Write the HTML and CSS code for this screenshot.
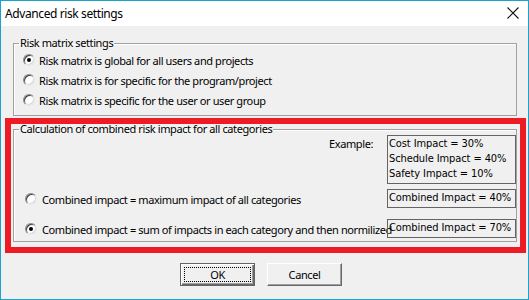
FILE: index.html
```html
<!DOCTYPE html>
<html lang="en">

<head>
    <meta charset="UTF-8">
    <title>Advanced risk settings</title>
    <link rel="stylesheet" href="styles.css">
</head>

<body>

    <div class="window">
        <div class="titlebar">
            <span class="title">Advanced risk settings</span>
            <svg class="close" width="12" height="12" viewBox="0 0 12 12">
                <path d="M0.5 0.5 L11.5 11.5 M11.5 0.5 L0.5 11.5" stroke="#111" stroke-width="1.1" fill="none"/>
            </svg>
        </div>

        <div class="content">
            <fieldset class="group group-matrix">
                <legend>Risk matrix settings</legend>
                <label class="option"><span class="radio checked"></span>Risk matrix is global for all users and projects</label>
                <label class="option"><span class="radio"></span>Risk matrix is for specific for the program/project</label>
                <label class="option"><span class="radio"></span>Risk matrix is specific for the user or user group</label>
            </fieldset>

            <div class="highlight">
                <fieldset class="group group-calc">
                    <legend>Calculation of combined risk impact for all categories</legend>
                    <div class="calc-grid">
                        <div class="example-label">Example:</div>
                        <div class="box box-example">
                            Cost Impact = 30%<br>
                            Schedule Impact = 40%<br>
                            Safety Impact = 10%
                        </div>

                        <label class="option option-calc row-max"><span class="radio"></span>Combined impact = maximum impact of all categories</label>
                        <div class="box box-result row-max">Combined Impact = 40%</div>

                        <label class="option option-calc row-sum"><span class="radio checked"></span>Combined impact = sum of impacts in each category and then normilized</label>
                        <div class="box box-result row-sum">Combined Impact = 70%</div>
                    </div>
                </fieldset>
            </div>

            <div class="buttons">
                <button class="btn btn-default"><span class="focus">OK</span></button>
                <button class="btn">Cancel</button>
            </div>
        </div>
    </div>

</body>

</html>
```

FILE: styles.css
```css
body {
    margin: 0;
    font-family: 'Noto Sans', 'Open Sans', sans-serif;
    font-size: 11px;
    letter-spacing: -0.4px;
    color: #000;
    background-color: #fff;
}

.window {
    width: 529px;
    height: 300px;
    box-sizing: border-box;
    border: 1px solid #1aa1cc;
    display: flex;
    flex-direction: column;
    overflow: hidden;
}

.titlebar {
    height: 25px;
    flex: none;
    display: flex;
    align-items: center;
    justify-content: space-between;
    padding: 0 9px 0 4px;
    background-color: #fff;
}

.title {
    font-size: 12px;
    letter-spacing: -0.4px;
    line-height: 18px;
}

.close {
    display: block;
    margin-top: -1px;
}

.content {
    flex: 1;
    background-color: #f0f0f0;
}

/* Cadres de groupe */
.group {
    box-sizing: border-box;
    width: 504px;
    margin: 0;
    padding: 0;
    border: 1px solid #a0a0a0;
    box-shadow: inset 1px 1px 0 #fff;
    min-width: 0;
}

.group legend {
    margin-left: 5px;
    padding: 0 1px;
    line-height: 14px;
}

.group-matrix {
    margin: 10px 0 0 12px;
    padding-bottom: 5px;
}

.option {
    display: flex;
    align-items: center;
    height: 20px;
    padding-left: 9px;
    white-space: nowrap;
}

.radio {
    box-sizing: border-box;
    width: 12px;
    height: 12px;
    margin-right: 4px;
    border-radius: 50%;
    background-color: #fff;
    border: 1px solid;
    border-color: #8a8a8a #e8e8e8 #e8e8e8 #8a8a8a;
    box-shadow: inset 1px 1px 0 #404040, inset -1px -1px 0 #d8d8d8;
    position: relative;
    flex: none;
}

.radio.checked::after {
    content: "";
    position: absolute;
    left: 3px;
    top: 3px;
    width: 4px;
    height: 4px;
    border-radius: 50%;
    background-color: #000;
}

/* Cadre rouge */
.highlight {
    width: 521px;
    box-sizing: border-box;
    margin: 2px 0 0 4px;
    border: 6px solid #ed1c24;
    padding: 0 0 5px 2px;
}

.group-calc {
    margin-top: -2px;
    padding-bottom: 2px;
}

.calc-grid {
    display: grid;
    grid-template-columns: minmax(0, 1fr) 129px;
    margin-top: -1px;
}

.example-label {
    text-align: right;
    padding-right: 14px;
    line-height: 15px;
    padding-top: 1px;
}

.box {
    box-sizing: border-box;
    border: 1px solid #646464;
    font-family: 'DejaVu Sans Condensed', 'DejaVu Sans', sans-serif;
    font-stretch: condensed;
    font-size: 11px;
    letter-spacing: -0.1px;
    padding-left: 1px;
    white-space: nowrap;
    overflow: hidden;
}

.box-example {
    height: 49px;
    line-height: 15px;
}

.box-result {
    height: 19px;
    line-height: 16px;
}

.row-max {
    margin-top: 5px;
}

.row-sum {
    margin-top: 10px;
}

.option-calc {
    padding-left: 11px;
}

.option-calc .radio {
    margin-right: 5px;
}

/* Boutons */
.buttons {
    display: flex;
    gap: 12px;
    padding: 10px 0 0 179px;
}

.btn {
    box-sizing: border-box;
    width: 75px;
    height: 23px;
    padding: 0;
    font-family: inherit;
    font-size: 11px;
    letter-spacing: inherit;
    background-color: #f0f0f0;
    border: 1px solid;
    border-color: #fff #696969 #696969 #fff;
    box-shadow: inset -1px -1px 0 #a0a0a0;
    color: #000;
}

.btn-default {
    border: 1px solid #646464;
    box-shadow: inset 1px 1px 0 #fff, inset -1px -1px 0 #696969, inset -2px -2px 0 #a0a0a0;
    padding: 3px;
}

.focus {
    display: block;
    height: 100%;
    box-sizing: border-box;
    border: 1px dotted #000;
    line-height: 13px;
}
```
